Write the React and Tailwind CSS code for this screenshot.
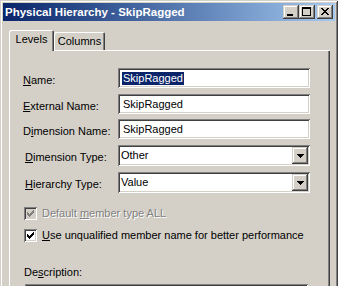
import React from "react";

const sunken =
  "shadow-[inset_1px_1px_0_#808080,inset_-1px_-1px_0_#ffffff,inset_2px_2px_0_#404040,inset_-2px_-2px_0_#d4d0c8]";
const raised =
  "shadow-[inset_-1px_-1px_0_#404040,inset_1px_1px_0_#d4d0c8,inset_-2px_-2px_0_#808080,inset_2px_2px_0_#ffffff]";

function CaptionButton({ kind }) {
  return (
    <div className={`w-[16px] h-[14px] bg-[#d4d0c8] ${raised}`}>
      <svg width="16" height="14" shapeRendering="crispEdges">
        {kind === "min" && <rect x="4" y="9" width="6" height="2" fill="#000" />}
        {kind === "max" && (
          <g fill="#000">
            <rect x="3" y="2" width="9" height="2" />
            <rect x="3" y="2" width="1" height="9" />
            <rect x="11" y="2" width="1" height="9" />
            <rect x="3" y="10" width="9" height="1" />
          </g>
        )}
        {kind === "close" && (
          <g fill="#000">
            <rect x="4" y="3" width="2" height="1" />
            <rect x="10" y="3" width="2" height="1" />
            <rect x="5" y="4" width="2" height="1" />
            <rect x="9" y="4" width="2" height="1" />
            <rect x="6" y="5" width="4" height="1" />
            <rect x="7" y="6" width="2" height="1" />
            <rect x="6" y="7" width="4" height="1" />
            <rect x="5" y="8" width="2" height="1" />
            <rect x="9" y="8" width="2" height="1" />
            <rect x="4" y="9" width="2" height="1" />
            <rect x="10" y="9" width="2" height="1" />
          </g>
        )}
      </svg>
    </div>
  );
}

function TextRow({ label, value, selected }) {
  return (
    <div className="flex items-center">
      <div className="w-[95px] pt-[4px] leading-[13px]">{label}</div>
      <div className={`w-[192px] h-[20px] bg-white flex items-center pl-[4px] ${sunken}`}>
        {selected ? (
          <span className="bg-[#0a246a] text-white leading-[13px] pl-[1px] pr-[1px]">{value}</span>
        ) : (
          <span className="leading-[13px] pl-[1px]">{value}</span>
        )}
      </div>
    </div>
  );
}

function ComboRow({ label, value }) {
  return (
    <div className="flex items-center">
      <div className="w-[95px] pt-[4px] pl-[2px] leading-[13px]">{label}</div>
      <div className={`w-[192px] h-[21px] bg-white flex items-center justify-between p-[2px] ${sunken}`}>
        <span className="leading-[13px] pl-[1px]">{value}</span>
        <div className={`w-[16px] h-[17px] bg-[#d4d0c8] flex items-center justify-center ${raised}`}>
          <svg width="7" height="4" shapeRendering="crispEdges">
            <path d="M0 0h7v1H0zM1 1h5v1H1zM2 2h3v1H2zM3 3h1v1H3z" fill="#000" />
          </svg>
        </div>
      </div>
    </div>
  );
}

function Checkbox({ disabled, children }) {
  const c = disabled ? "#808080" : "#000";
  return (
    <div className="flex items-center ml-[1px]">
      <div className={`w-[13px] h-[13px] ${disabled ? "bg-[#d4d0c8]" : "bg-white"} ${sunken}`}>
        <svg width="13" height="13" shapeRendering="crispEdges">
          <g fill={c}>
            <rect x="3" y="5" width="1" height="3" />
            <rect x="4" y="6" width="1" height="3" />
            <rect x="5" y="7" width="1" height="3" />
            <rect x="6" y="6" width="1" height="3" />
            <rect x="7" y="5" width="1" height="3" />
            <rect x="8" y="4" width="1" height="3" />
            <rect x="9" y="3" width="1" height="3" />
          </g>
        </svg>
      </div>
      <div
        className={`ml-[5px] leading-[13px] ${
          disabled ? "text-[#808080] [text-shadow:1px_1px_0_#ffffff]" : "text-black"
        }`}
      >
        {children}
      </div>
    </div>
  );
}

export default function App() {
  return (
    <div className="w-[338px] h-[286px] overflow-hidden bg-[#d4d0c8] font-['Liberation_Sans',Arial,sans-serif] text-[11px] text-black">
      <div className="h-[330px] p-[3px] shadow-[inset_1px_1px_0_#d4d0c8,inset_-1px_-1px_0_#404040,inset_2px_2px_0_#ffffff,inset_-2px_-2px_0_#808080]">
        {/* title bar */}
        <div className="h-[18px] flex items-center justify-between bg-gradient-to-r from-[#0a246a] to-[#a6caf0] pl-[2px] pr-[2px]">
          <span className="text-white font-bold text-[11.5px] leading-[13px]">Physical Hierarchy - SkipRagged</span>
          <div className="flex items-center">
            <CaptionButton kind="min" />
            <CaptionButton kind="max" />
            <div className="w-[2px]" />
            <CaptionButton kind="close" />
          </div>
        </div>

        {/* tabs */}
        <div className="ml-[6px] mt-[9px]">
          <div className="flex items-end h-[20px]">
            <div className="relative z-10 w-[45px] h-[21px] -mb-px bg-[#d4d0c8] rounded-tl-[2px] rounded-tr-[2px] shadow-[inset_1px_1px_0_#ffffff,inset_-1px_0_0_#404040,inset_-2px_0_0_#808080] flex items-center justify-center pb-[2px]">
              <span className="leading-[13px]">Levels</span>
            </div>
            <div className="w-[51px] h-[18px] bg-[#d4d0c8] rounded-tl-[2px] rounded-tr-[2px] shadow-[inset_1px_1px_0_#ffffff,inset_-1px_0_0_#404040,inset_-2px_0_0_#808080] flex items-center justify-center">
              <span className="leading-[13px]">Columns</span>
            </div>
          </div>

          {/* panel */}
          <div className="w-[321px] h-[280px] shadow-[inset_1px_1px_0_#ffffff,inset_-1px_-1px_0_#404040,inset_-2px_-2px_0_#808080] pl-[14px] pt-[18px] flex flex-col">
            <TextRow label={<><u>N</u>ame:</>} value="SkipRagged" selected />
            <div className="mt-[6px]">
              <TextRow label={<><u>E</u>xternal Name:</>} value="SkipRagged" />
            </div>
            <div className="mt-[5px]">
              <TextRow label={<>D<u>i</u>mension Name:</>} value="SkipRagged" />
            </div>
            <div className="mt-[6px]">
              <ComboRow label={<><u>D</u>imension Type:</>} value="Other" />
            </div>
            <div className="mt-[6px]">
              <ComboRow label={<><u>H</u>ierarchy Type:</>} value="Value" />
            </div>
            <div className="mt-[14px]">
              <Checkbox disabled>
                Default <u>m</u>ember type ALL
              </Checkbox>
            </div>
            <div className="mt-[9px]">
              <Checkbox>
                <u>U</u>se unqualified member name for better performance
              </Checkbox>
            </div>
            <div className="mt-[24px] ml-[1px] leading-[13px]">
              De<u>s</u>cription:
            </div>
            <div className={`mt-[5px] ml-[2px] w-[283px] h-[50px] bg-white p-[2px] flex justify-end ${sunken}`}>
              <div className={`w-[16px] h-[16px] bg-[#d4d0c8] ${raised}`} />
            </div>
          </div>
        </div>
      </div>
    </div>
  );
}
